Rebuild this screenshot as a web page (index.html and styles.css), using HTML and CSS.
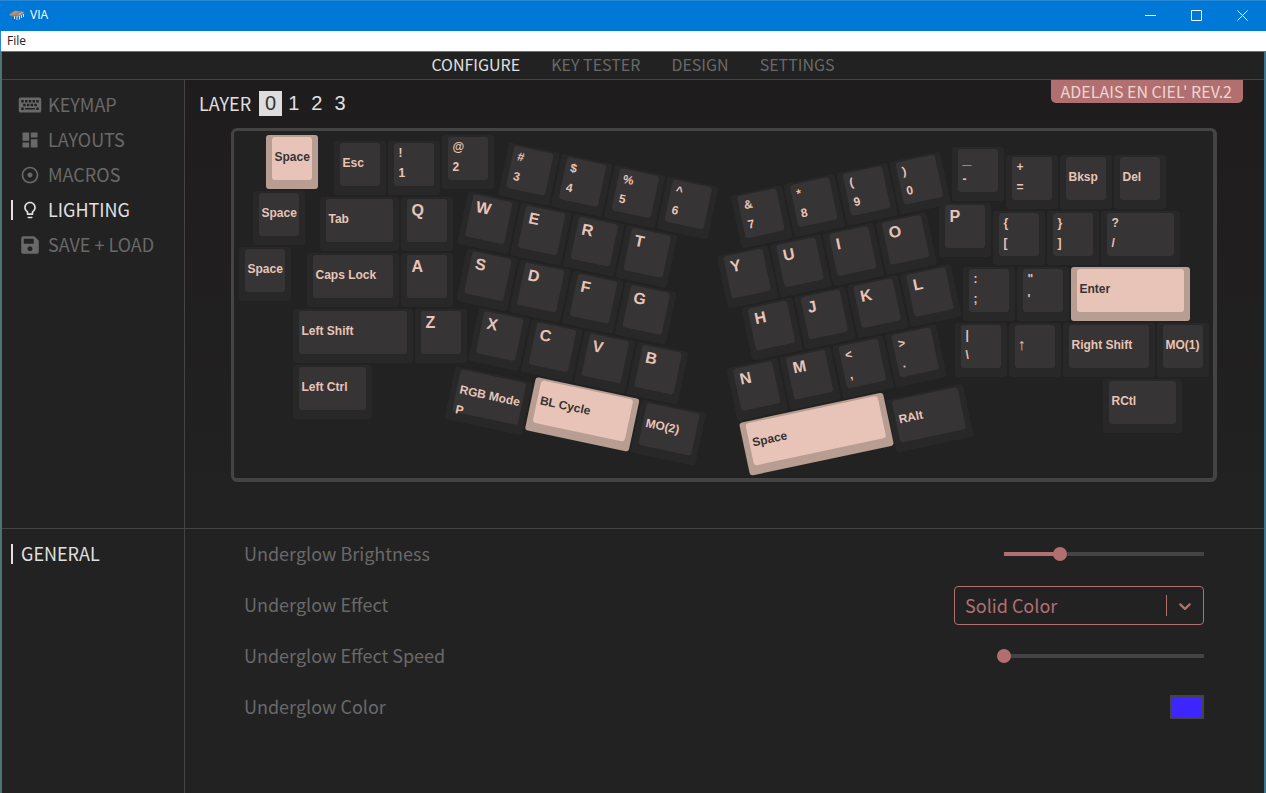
FILE: index.html
```html
<!DOCTYPE html>
<html lang="en">
<head>
<meta charset="utf-8">
<title>VIA</title>
<link rel="stylesheet" href="styles.css">
</head>
<body>
<div class="window">
  <header class="titlebar">
    <svg class="app-icon" viewBox="0 0 16 12" aria-hidden="true">
      <path d="M0 5.500 6 1.500 15 2.500 15.500 4.500 10 8 1 7z" fill="#8d8184"/>
      <path d="M1 5.500 6 2 10 2.500 5 6z" fill="#c98d6c"/>
      <path d="M8 5.500 12 3 14.500 3.500 10 6.500z" fill="#b9a39b"/>
      <path d="M5.500 7v3M8 7v4M10.500 7v3.500M12.500 6v3M14.500 5v3" stroke="#d9dde6" stroke-width="1"/>
    </svg>
    <span class="app-name">VIA</span>
    <div class="window-buttons">
      <button type="button" aria-label="Minimize"><svg viewBox="0 0 11 11"><path d="M0 5.500h11"/></svg></button>
      <button type="button" aria-label="Maximize"><svg viewBox="0 0 11 11"><path d="M.5.5h10v10H.5z"/></svg></button>
      <button type="button" aria-label="Close"><svg viewBox="0 0 11 11"><path d="M.5.5l10 10M10.500.5l-10 10"/></svg></button>
    </div>
  </header>
  <div class="menubar"><button type="button">File</button></div>

  <div class="app">
    <nav class="tabs">
      <a href="#configure" class="active">CONFIGURE</a>
      <a href="#tester">KEY TESTER</a>
      <a href="#design">DESIGN</a>
      <a href="#settings">SETTINGS</a>
    </nav>

    <div class="upper">
      <nav class="side">
        <a href="#keymap"><svg class="wide" viewBox="0 0 576 512"><path fill-rule="evenodd" d="M48 64h480a48 48 0 0 1 48 48v288a48 48 0 0 1-48 48H48a48 48 0 0 1-48-48V112a48 48 0 0 1 48-48zM64 128h64v64H64zM160 128h64v64h-64zM256 128h64v64h-64zM352 128h64v64h-64zM448 128h64v64h-64zM112 224h64v64h-64zM208 224h64v64h-64zM304 224h64v64h-64zM400 224h64v64h-64zM64 320h64v64H64zM160 330h256v44H160zM448 320h64v64h-64z"/></svg>KEYMAP</a>
        <a href="#layouts"><svg viewBox="0 0 24 24"><path d="M3 13h8V3H3v10zm0 8h8v-6H3v6zm10 0h8V11h-8v10zm0-18v6h8V3h-8z"/></svg>LAYOUTS</a>
        <a href="#macros"><svg viewBox="0 0 24 24"><path d="M12 2C6.490 2 2 6.490 2 12s4.490 10 10 10 10-4.490 10-10S17.510 2 12 2zm0 18c-4.410 0-8-3.590-8-8s3.590-8 8-8 8 3.590 8 8-3.590 8-8 8zm3-8c0 1.660-1.340 3-3 3s-3-1.340-3-3 1.340-3 3-3 3 1.340 3 3z"/></svg>MACROS</a>
        <a href="#lighting" class="active"><svg viewBox="0 0 24 24"><path d="M9 21c0 .5.4 1 1 1h4c.6 0 1-.5 1-1v-1H9v1zm3-19C8.100 2 5 5.100 5 9c0 2.400 1.200 4.500 3 5.700V17c0 .5.4 1 1 1h6c.6 0 1-.5 1-1v-2.300c1.800-1.300 3-3.400 3-5.700 0-3.900-3.100-7-7-7zm2.900 11.100l-.9.6V16h-4v-2.300l-.8-.6C7.800 12.200 7 10.600 7 9c0-2.800 2.200-5 5-5s5 2.200 5 5c0 1.600-.8 3.200-2.100 4.100z"/></svg>LIGHTING</a>
        <a href="#save"><svg viewBox="0 0 448 512"><path d="M433.941 129.941l-83.882-83.882A48 48 0 0 0 316.118 32H48C21.490 32 0 53.490 0 80v352c0 26.510 21.490 48 48 48h352c26.510 0 48-21.490 48-48V163.882a48 48 0 0 0-14.059-33.941zM224 416c-35.346 0-64-28.654-64-64 0-35.346 28.654-64 64-64s64 28.654 64 64c0 35.346-28.654 64-64 64zm96-304.520V212c0 6.627-5.373 12-12 12H76c-6.627 0-12-5.373-12-12V108c0-6.627 5.373-12 12-12h228.520c3.183 0 6.235 1.264 8.485 3.515l3.480 3.480A11.996 11.996 0 0 1 320 111.480z"/></svg>SAVE + LOAD</a>
      </nav>

      <main class="stage">
        <div class="board-name">ADELAIS EN CIEL' REV.2</div>
        <div class="layers">
          <span>LAYER</span>
          <button type="button" class="active">0</button><button type="button">1</button><button type="button">2</button><button type="button">3</button>
        </div>

        <div class="board">
          <button class="key lit" style="--x:32;--y:4"><span class="cap"><b>Space</b></span></button>
          <button class="key" style="--x:19;--y:60"><span class="cap"><b>Space</b></span></button>
          <button class="key" style="--x:5;--y:116"><span class="cap"><b>Space</b></span></button>

          <button class="key" style="--x:100;--y:10"><span class="cap"><b>Esc</b></span></button>
          <button class="key duo" style="--x:154;--y:10"><span class="cap"><b>!</b><b>1</b></span></button>
          <button class="key duo" style="--x:208;--y:4"><span class="cap"><b>@</b><b>2</b></span></button>
          <button class="key" style="--x:86;--y:66;--w:79"><span class="cap"><b>Tab</b></span></button>
          <button class="key letter" style="--x:167;--y:66"><span class="cap"><b>Q</b></span></button>
          <button class="key" style="--x:73;--y:122;--w:92"><span class="cap"><b>Caps Lock</b></span></button>
          <button class="key letter" style="--x:167;--y:122"><span class="cap"><b>A</b></span></button>
          <button class="key" style="--x:59;--y:178;--w:120"><span class="cap"><b>Left Shift</b></span></button>
          <button class="key letter" style="--x:181;--y:178"><span class="cap"><b>Z</b></span></button>
          <button class="key" style="--x:59;--y:234;--w:79"><span class="cap"><b>Left Ctrl</b></span></button>

          <div class="cluster left">
            <button class="key duo" style="--x:-75;--y:-224"><span class="cap"><b>#</b><b>3</b></span></button>
            <button class="key duo" style="--x:-21;--y:-224"><span class="cap"><b>$</b><b>4</b></span></button>
            <button class="key duo" style="--x:33;--y:-224"><span class="cap"><b>%</b><b>5</b></span></button>
            <button class="key duo" style="--x:87;--y:-224"><span class="cap"><b>^</b><b>6</b></span></button>
            <button class="key letter" style="--x:-105;--y:-168"><span class="cap"><b>W</b></span></button>
            <button class="key letter" style="--x:-51;--y:-168"><span class="cap"><b>E</b></span></button>
            <button class="key letter" style="--x:3;--y:-168"><span class="cap"><b>R</b></span></button>
            <button class="key letter" style="--x:57;--y:-168"><span class="cap"><b>T</b></span></button>
            <button class="key letter" style="--x:-94;--y:-112"><span class="cap"><b>S</b></span></button>
            <button class="key letter" style="--x:-40;--y:-112"><span class="cap"><b>D</b></span></button>
            <button class="key letter" style="--x:14;--y:-112"><span class="cap"><b>F</b></span></button>
            <button class="key letter" style="--x:68;--y:-112"><span class="cap"><b>G</b></span></button>
            <button class="key letter" style="--x:-70;--y:-56"><span class="cap"><b>X</b></span></button>
            <button class="key letter" style="--x:-16;--y:-56"><span class="cap"><b>C</b></span></button>
            <button class="key letter" style="--x:38;--y:-56"><span class="cap"><b>V</b></span></button>
            <button class="key letter" style="--x:92;--y:-56"><span class="cap"><b>B</b></span></button>
            <button class="key" style="--x:-81;--y:6;--w:79"><span class="cap"><b>RGB Mode</b><b>P</b></span></button>
            <button class="key lit" style="--x:0;--y:0;--w:106"><span class="cap"><b>BL Cycle</b></span></button>
            <button class="key" style="--x:108;--y:0;--w:66"><span class="cap"><b>MO(2)</b></span></button>
          </div>

          <div class="cluster right">
            <button class="key duo" style="--x:39;--y:-224"><span class="cap"><b>&amp;</b><b>7</b></span></button>
            <button class="key duo" style="--x:93;--y:-224"><span class="cap"><b>*</b><b>8</b></span></button>
            <button class="key duo" style="--x:147;--y:-224"><span class="cap"><b>(</b><b>9</b></span></button>
            <button class="key duo" style="--x:201;--y:-224"><span class="cap"><b>)</b><b>0</b></span></button>
            <button class="key letter" style="--x:13;--y:-168"><span class="cap"><b>Y</b></span></button>
            <button class="key letter" style="--x:67;--y:-168"><span class="cap"><b>U</b></span></button>
            <button class="key letter" style="--x:121;--y:-168"><span class="cap"><b>I</b></span></button>
            <button class="key letter" style="--x:175;--y:-168"><span class="cap"><b>O</b></span></button>
            <button class="key letter" style="--x:26;--y:-112"><span class="cap"><b>H</b></span></button>
            <button class="key letter" style="--x:80;--y:-112"><span class="cap"><b>J</b></span></button>
            <button class="key letter" style="--x:134;--y:-112"><span class="cap"><b>K</b></span></button>
            <button class="key letter" style="--x:188;--y:-112"><span class="cap"><b>L</b></span></button>
            <button class="key letter" style="--x:-1;--y:-56"><span class="cap"><b>N</b></span></button>
            <button class="key letter" style="--x:53;--y:-56"><span class="cap"><b>M</b></span></button>
            <button class="key duo" style="--x:107;--y:-56"><span class="cap"><b>&lt;</b><b>,</b></span></button>
            <button class="key duo" style="--x:161;--y:-56"><span class="cap"><b>&gt;</b><b>.</b></span></button>
            <button class="key lit" style="--x:0;--y:0;--w:147"><span class="cap"><b>Space</b></span></button>
            <button class="key" style="--x:148;--y:8;--w:79"><span class="cap"><b>RAlt</b></span></button>
          </div>

          <button class="key duo" style="--x:718;--y:16"><span class="cap"><b class="rule">_</b><b>-</b></span></button>
          <button class="key duo" style="--x:772;--y:24"><span class="cap"><b>+</b><b>=</b></span></button>
          <button class="key" style="--x:826;--y:24"><span class="cap"><b>Bksp</b></span></button>
          <button class="key" style="--x:880;--y:24"><span class="cap"><b>Del</b></span></button>
          <button class="key letter" style="--x:705;--y:72"><span class="cap"><b>P</b></span></button>
          <button class="key duo" style="--x:759;--y:80"><span class="cap"><b>{</b><b>[</b></span></button>
          <button class="key duo" style="--x:813;--y:80"><span class="cap"><b>}</b><b>]</b></span></button>
          <button class="key duo" style="--x:867;--y:80;--w:79"><span class="cap"><b>?</b><b>/</b></span></button>
          <button class="key duo" style="--x:729;--y:136"><span class="cap"><b>:</b><b>;</b></span></button>
          <button class="key duo" style="--x:783;--y:136"><span class="cap"><b>"</b><b>'</b></span></button>
          <button class="key lit" style="--x:837;--y:136;--w:119"><span class="cap"><b>Enter</b></span></button>
          <button class="key duo" style="--x:721;--y:192"><span class="cap"><b>|</b><b>\</b></span></button>
          <button class="key" style="--x:775;--y:192"><span class="cap"><b class="arrow">↑</b></span></button>
          <button class="key" style="--x:829;--y:192;--w:92"><span class="cap"><b>Right Shift</b></span></button>
          <button class="key" style="--x:923;--y:192"><span class="cap"><b>MO(1)</b></span></button>
          <button class="key" style="--x:869;--y:248;--w:79"><span class="cap"><b>RCtl</b></span></button>
        </div>
      </main>
    </div>

    <div class="lower">
      <nav class="side">
        <a href="#general" class="active">GENERAL</a>
      </nav>
      <form class="settings">
        <div class="row">
          <label for="brightness">Underglow Brightness</label>
          <input id="brightness" type="range" min="0" max="100" value="28" style="--value:28">
        </div>
        <div class="row">
          <label for="effect">Underglow Effect</label>
          <div class="select">
            <select id="effect"><option>Solid Color</option></select>
            <svg viewBox="0 0 20 20" aria-hidden="true"><path d="M4.516 7.548c0.436-0.446 1.043-0.481 1.576 0l3.908 3.747 3.908-3.747c0.533-0.481 1.141-0.446 1.574 0 0.436 0.445 0.408 1.197 0 1.615-0.406 0.418-4.695 4.502-4.695 4.502-0.217 0.223-0.502 0.335-0.787 0.335s-0.570-0.112-0.789-0.335c0 0-4.287-4.084-4.695-4.502s-0.436-1.170 0-1.615z"/></svg>
          </div>
        </div>
        <div class="row">
          <label for="speed">Underglow Effect Speed</label>
          <input id="speed" type="range" min="0" max="100" value="0" style="--value:0">
        </div>
        <div class="row">
          <label for="color">Underglow Color</label>
          <input id="color" type="color" value="#3d26ff">
        </div>
      </form>
    </div>
  </div>
</div>
</body>
</html>
```
FILE: styles.css
```css
:root {
  --bg: #222222;
  --line: #444444;
  --muted: #696969;
  --bright: #e0e0e0;
  --accent: #b26f70;
  --alpha: #363434;
  --legend: #e8c4b8;
}

* { box-sizing: border-box; }

body {
  margin: 0;
  background: var(--bg);
  color: var(--muted);
  font: 18px/24px "Noto Sans CJK JP", "Noto Sans CJK SC", sans-serif;
}

button {
  margin: 0;
  padding: 0;
  border: 0;
  background: none;
  color: inherit;
  font: inherit;
}

a { color: inherit; text-decoration: none; }

.window {
  display: flex;
  flex-direction: column;
  min-height: 100vh;
}

/* Window frame */
.titlebar {
  display: flex;
  align-items: center;
  height: 31px;
  padding: 0 1px 2px 9px;
  border-top: 1px solid #2a86d6;
  background: #0078d7;
  color: #fff;
  font: 12px/16px "Open Sans", sans-serif;
}
.app-icon { width: 16px; height: 12px; }
.app-name { flex: 1; margin-left: 5px; }
.window-buttons { display: flex; }
.window-buttons button {
  display: grid;
  place-items: center;
  width: 46px;
  height: 28px;
}
.window-buttons svg {
  width: 11px;
  height: 11px;
  fill: none;
  stroke: #fff;
}
.menubar {
  display: flex;
  padding: 2px 6px;
  border-left: 1px solid #2a86d6;
  border-bottom: 1px solid #857234;
  background: #fff;
  color: #222;
  font: 12px/16px "Open Sans", sans-serif;
}

.app {
  display: flex;
  flex-direction: column;
  flex: 1;
  border-left: 2px solid #4c7472;
  border-right: 2px solid #3b7590;
}

/* Top navigation */
.tabs {
  display: flex;
  justify-content: center;
  gap: 31px;
  padding: 0 0 3px;
  border-bottom: 1px solid var(--line);
  font-size: 16px;
}
.tabs .active, .side .active { color: var(--bright); }

/* Side navigation */
.side {
  flex: 0 0 183px;
  padding-top: 6px;
  border-right: 1px solid var(--line);
}
.side a {
  display: flex;
  align-items: center;
  gap: 6px;
  height: 35px;
  padding-left: 16px;
}
.side svg {
  flex: none;
  width: 24px;
  height: 20px;
  margin-top: 2px;
  fill: currentColor;
}
.side .active { position: relative; }
.side .active::before {
  content: "";
  position: absolute;
  left: 9px;
  width: 2px;
  height: 20px;
  margin-top: 2px;
  background: var(--bright);
}

.upper, .lower { display: flex; }
.lower { flex: 1; border-top: 1px solid var(--line); }
.lower .side a { padding-left: 19px; }

/* Keyboard stage */
.stage {
  position: relative;
  flex: 1;
  padding: 11px 2px 46px 0;
  background: linear-gradient(#1f1c1d, #222222);
}
.board-name {
  position: absolute;
  top: 0;
  right: 21px;
  padding: 0 11px 0 10px;
  border-radius: 0 0 5px 5px;
  background: var(--accent);
  color: #ecd6d0;
  font-size: 16px;
  line-height: 23px;
}
.layers {
  display: flex;
  align-items: center;
  height: 25px;
  margin: 0 0 12px 14px;
  color: var(--bright);
}
.layers span { margin: 0 8px 2px 0; }
.layers button {
  padding: 0 6px;
  font: 20px/25px "Liberation Sans", Arial, sans-serif;
}
.layers .active { background: #dddddd; color: #333; }

.board {
  position: relative;
  width: 986px;
  height: 354px;
  margin: 0 auto;
  border: solid var(--line);
  border-width: 3px 4px 4px 3px;
  border-radius: 6px;
  background: var(--bg);
}
.cluster { position: absolute; }
.cluster.left { left: 302px; top: 246px; transform: rotate(12deg); }
.cluster.right { left: 505px; top: 292px; transform: rotate(-12deg); }

/* Keycaps, placed by --x and --y with width --w */
.key {
  --w: 52;
  position: absolute;
  left: calc(var(--x) * 1px);
  top: calc(var(--y) * 1px);
  width: calc(var(--w) * 1px);
  height: 54px;
  padding: 2px 6px 9px;
  border-radius: 3px;
  background: #292828;
  color: var(--legend);
  font: bold 12px/20px "Liberation Sans", Arial, sans-serif;
  text-align: left;
}
.cap {
  display: block;
  height: 43px;
  padding: 10px 0 0 3px;
  border-radius: 3px;
  background: var(--alpha);
  white-space: nowrap;
}
.cap b { display: block; }
.duo .cap { padding: 0 0 0 5px; }
.duo .rule { font-size: 16px; }
.cap .arrow { font-size: 16px; font-weight: normal; }
.letter .cap { padding: 2px 0 0 5px; font-size: 16px; }
.key.lit { background: #b89d92; color: #363434; }
.lit .cap { background: var(--legend); }

/* Lighting settings */
.settings { flex: 1; padding: 0 60px 0 59px; }
.row {
  display: flex;
  align-items: center;
  justify-content: space-between;
  height: 51px;
  padding-bottom: 1px;
}
.row label { margin-bottom: 2px; }

input[type="range"] {
  appearance: none;
  width: 214px;
  height: 14px;
  margin: 0 -7px 0 0;
  background: none;
}
input[type="range"]::-webkit-slider-runnable-track {
  --stop: calc(7px + var(--value) * 2px);
  height: 4px;
  border-radius: 2px;
  background: linear-gradient(90deg, transparent 7px, var(--accent) 7px, var(--accent) var(--stop), var(--line) var(--stop), var(--line) 207px, transparent 207px);
}
input[type="range"]::-webkit-slider-thumb {
  appearance: none;
  width: 14px;
  height: 14px;
  margin-top: -5px;
  border-radius: 50%;
  background: var(--accent);
}

.select {
  position: relative;
  width: 250px;
}
.select select {
  appearance: none;
  display: block;
  width: 100%;
  height: 39px;
  padding: 0 48px 0 10px;
  border: 1px solid var(--accent);
  border-radius: 4px;
  background: transparent;
  color: var(--accent);
  font: inherit;
}
.select::after {
  content: "";
  position: absolute;
  top: 9px;
  bottom: 9px;
  right: 37px;
  width: 1px;
  background: var(--accent);
}
.select svg {
  position: absolute;
  top: 10px;
  right: 9px;
  width: 20px;
  height: 20px;
  fill: var(--accent);
  pointer-events: none;
}

input[type="color"] {
  width: 34px;
  height: 24px;
  padding: 0;
  border: 2px solid var(--line);
  background: none;
}
input[type="color"]::-webkit-color-swatch-wrapper { padding: 0; }
input[type="color"]::-webkit-color-swatch { border: 0; }
```
